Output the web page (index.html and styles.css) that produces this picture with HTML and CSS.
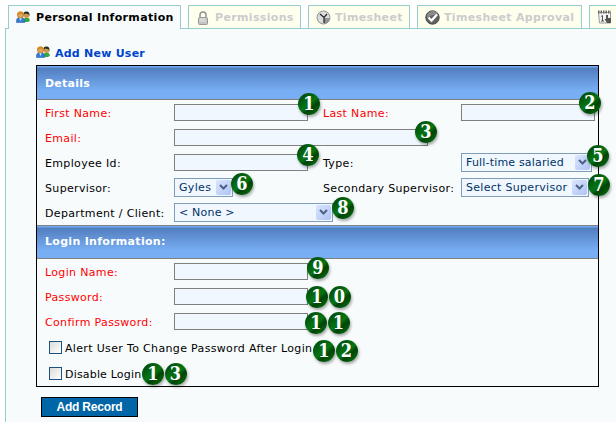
FILE: index.html
```html
<!DOCTYPE html>
<html lang="en">
<head>
<meta charset="utf-8">
<title>Add New User</title>
<link rel="stylesheet" href="styles.css">
</head>
<body>
<svg class="defs" width="0" height="0">
  <defs>
    <symbol id="users" viewBox="0 0 14 12">
      <path d="M8 11V8.500Q8 6.500 10.500 6.500T13.700 8.500V10L12 11Z" fill="#35a83c"/>
      <circle cx="10.500" cy="4" r="3" fill="#c99a55"/>
      <path d="M7.500 4Q7 .5 10.500 .5 14 .5 13.300 5L12.300 3 9 2.500Z" fill="#202a20"/>
      <path d="M.5 11.500V9Q.7 6.500 4.500 6.500T8.700 9V11.500Z" fill="#347bd2" stroke="#1d58a8" stroke-width=".5"/>
      <path d="M3 6.500 4.500 10 6 6.500Z" fill="#d9efff"/>
      <circle cx="4.500" cy="4" r="3.100" fill="#e2a35a" stroke="#a96313" stroke-width=".6"/>
      <path d="M1.300 4Q1 .6 4.500 .6 8 .6 7.700 4L5.500 2.500Z" fill="#d58a1e"/>
    </symbol>
  </defs>
</svg>
<div class="page">
  <nav class="tabs">
    <a class="tab t1 active"><svg class="users" width="14" height="12"><use href="#users"/></svg><span>Personal Information</span></a>
    <a class="tab t2"><svg width="10" height="14" viewBox="0 0 10 14"><path d="M2 7V4Q2 1 5 1T8 4V7" fill="none" stroke="#929292" stroke-width="1.500"/><rect x=".5" y="6.500" width="9" height="7" rx="1" fill="#c4c4c4" stroke="#999"/><path d="M1.500 8h6M1.500 10h6" stroke="#e9e9e9"/></svg><span>Permissions</span></a>
    <a class="tab t3"><svg width="15" height="15" viewBox="0 0 15 15"><circle cx="7.500" cy="7.500" r="6.500" fill="#dcdcdc" stroke="#929292"/><path d="M8 8H14Q13 13 8 14Z" fill="#929292"/><path d="M4 4 8 7.500 11 4M8 7.500V13" fill="none" stroke="#222" stroke-width="1.200"/></svg><span>Timesheet</span></a>
    <a class="tab t4"><svg width="15" height="15" viewBox="0 0 15 15"><circle cx="7.500" cy="7.500" r="6.700" fill="#626262" stroke="#484848"/><path d="M2 5Q4 1 8 1T13 5Q7 4 2 8Z" fill="#8a8a8a"/><path d="M3.500 7.500 6.500 10.500 12 4.500" fill="none" stroke="#fff" stroke-width="2.300"/></svg><span>Timesheet Approval</span></a>
    <a class="tab t5"><svg width="15" height="14" viewBox="0 0 15 14"><path d="M1.500 2.500H13.500V13H2.500Z" fill="#f4f4f4" stroke="#999"/><path d="M1 2h13" stroke="#666" stroke-width="3" stroke-dasharray="1.500 1"/><path d="M4 6.500 5.500 5.500V11M4 11h3" fill="none" stroke="#555"/><path d="M9 5h2v3h3v5h-4L7.500 9H9Z" fill="#555"/></svg></a>
  </nav>
  <main class="panel">
    <h1><svg class="users" width="14" height="12"><use href="#users"/></svg><span>Add New User</span></h1>
    <form class="form">
      <h2>Details</h2>
      <div class="row"><label class="req">First Name:</label><i class="input"></i><label class="req second">Last Name:</label><i class="input"></i></div>
      <div class="row"><label class="req">Email:</label><i class="input wide"></i></div>
      <div class="row"><label>Employee Id:</label><i class="input"></i><label class="second">Type:</label><div class="select type"><span>Full-time salaried</span><b><svg width="9" height="7" viewBox="0 0 9 7"><path d="M1 1 4.500 4.500 8 1" /></svg></b></div></div>
      <div class="row"><label>Supervisor:</label><div class="select gyles"><span>Gyles</span><b><svg width="9" height="7" viewBox="0 0 9 7"><path d="M1 1 4.500 4.500 8 1" /></svg></b></div><label class="second">Secondary Supervisor:</label><div class="select super"><span>Select Supervisor</span><b><svg width="9" height="7" viewBox="0 0 9 7"><path d="M1 1 4.500 4.500 8 1" /></svg></b></div></div>
      <div class="row"><label>Department / Client:</label><div class="select dept"><span>&lt; None &gt;</span><b><svg width="9" height="7" viewBox="0 0 9 7"><path d="M1 1 4.500 4.500 8 1" /></svg></b></div></div>
      <h2 class="login">Login Information:</h2>
      <div class="row"><label class="req">Login Name:</label><i class="input"></i></div>
      <div class="row"><label class="req">Password:</label><i class="input"></i></div>
      <div class="row"><label class="req">Confirm Password:</label><i class="input"></i></div>
      <div class="checks">
        <div class="check"><i class="box"></i><span>Alert User To Change Password After Login</span></div>
        <div class="check"><i class="box"></i><span class="disable">Disable Login</span></div>
      </div>
    </form>
    <div class="button"><span>Add Record</span></div>
  </main>
  <div class="pin p1"><b>1</b></div>
  <div class="pin p2"><b>2</b></div>
  <div class="pin p3"><b>3</b></div>
  <div class="pin p4"><b>4</b></div>
  <div class="pin p5"><b>5</b></div>
  <div class="pin p6"><b>6</b></div>
  <div class="pin p7"><b>7</b></div>
  <div class="pin p8"><b>8</b></div>
  <div class="pin p9"><b>9</b></div>
  <div class="pin p10"><b>1</b><b>0</b></div>
  <div class="pin p11"><b>1</b><b>1</b></div>
  <div class="pin p12"><b>1</b><b>2</b></div>
  <div class="pin p13"><b>1</b><b>3</b></div>
</div>
</body>
</html>
```
FILE: styles.css
```css
* { box-sizing: border-box; }
body { margin: 0; background: #fff; color: #000; font: 11px/14px "DejaVu Sans", Verdana, sans-serif; letter-spacing: .34px; overflow: hidden; }
.defs { display: block; }
.page { position: relative; width: 616px; height: 422px; overflow: hidden; }
.tabs { display: flex; gap: 7px; padding: 5px 0 0 8px; height: 28px; width: 640px; }
.tab { display: flex; align-items: center; flex: none; height: 23px; border: 1px solid #9cc; border-bottom: 0; background: #ffffee; color: #ccc; padding: 1px 0 0 7px; font-weight: bold; white-space: nowrap; }
.tab svg { flex: none; }
.tab span { padding-top: 1px; }
.t1 { width: 173px; }
.t2 { width: 113px; padding-left: 9px; }
.t3 { width: 102px; }
.t4 { width: 165px; }
.t5 { width: 60px; }
.t5 svg { margin-bottom: 1px; }
.t1 span { margin-left: 6px; }
.t2 span { margin-left: 7px; }
.t3 span, .t4 span { margin-left: 4px; }
.active { background: #f7fbfc; color: #000; height: 24px; padding-bottom: 1px; position: relative; z-index: 1; }
.active svg { margin-bottom: 2px; }
.panel { margin-left: 5px; height: 394px; border: solid #9cc; border-width: 1px 0 0 1px; background: #f7fbfc; padding: 16px 0 0 30px; }
h1 { display: flex; align-items: center; margin: 0 0 4px; height: 16px; font-size: 11px; color: #04c; letter-spacing: .24px; }
h1 svg { margin-bottom: 2px; }
h1 span { margin-left: 5px; padding-top: 1px; }
.form { width: 563px; height: 322px; border: 1px solid #000; }
h2 { margin: 0; height: 34px; padding-left: 8px; border-bottom: 1px solid #808080; background: linear-gradient(#70a9f0 0 1px, #527dbf 2px, #78aff4 25px); color: #fff; font-size: 11px; line-height: 35px; letter-spacing: .24px; }
.login { border-top: 1px solid #808080; line-height: 32px; letter-spacing: .3px; }
.row { display: grid; grid-template-columns: 129px 149px 138px 136px; align-items: center; height: 25px; padding-left: 8px; white-space: nowrap; }
label { padding-top: 2px; }
.req { color: #f00; }
.input { width: 134px; height: 17px; border: 1px solid #808080; background: #f0f7ff; }
.wide { width: 254px; }
.select { display: flex; align-items: center; justify-content: space-between; height: 19px; border: 1px solid #7f9db9; background: #f0f7ff; color: #036; padding: 1px 1px 1px 4px; }
.select span { padding-top: 1px; }
.select b { display: grid; place-items: center; width: 15px; height: 15px; border-radius: 2px; background: linear-gradient(135deg, #dae5ff, #afc3f3); }
.select path { fill: none; stroke: #4d6185; stroke-width: 2; }
.type { width: 131px; letter-spacing: .18px; }
.super { width: 128px; letter-spacing: .3px; }
.gyles { width: 59px; }
.dept { width: 159px; letter-spacing: .2px; }
.checks { padding-top: 1px; }
.check { display: flex; align-items: center; height: 26px; padding-left: 12px; white-space: nowrap; }
.check span { padding-top: 2px; }
.disable { letter-spacing: .18px; }
.box { width: 13px; height: 13px; border: 1px solid #1c5180; background: linear-gradient(135deg, #dcdcd7, #fff); margin: 0 3px 1px 0; }
.button { display: grid; place-items: center; width: 97px; height: 20px; margin: 10px 0 0 5px; border: 1px solid #000; background: #0066a8; color: #fff; font: bold 12px/14px "Liberation Sans", Arial, sans-serif; letter-spacing: -.2px; }
.pin { position: absolute; z-index: 2; display: flex; color: #fff; letter-spacing: 0; }
.pin b { width: 22px; height: 22px; margin-right: .5px; border-radius: 50%; background: linear-gradient(140deg, #00410a, #077513 50%, #004408 65%, #087812); box-shadow: 1px 2px 3px #0005; font: bold 18px/22px "DejaVu Serif Condensed", "DejaVu Serif", serif; font-stretch: condensed; text-align: center; }
.p1 { left: 298px; top: 93px; }
.p2 { left: 579px; top: 92px; }
.p3 { left: 415px; top: 121px; }
.p4 { left: 297px; top: 144px; }
.p5 { left: 587px; top: 145px; }
.p6 { left: 231px; top: 173px; }
.p7 { left: 588px; top: 174px; }
.p8 { left: 332px; top: 197px; }
.p9 { left: 307px; top: 257px; }
.p10 { left: 306px; top: 286px; }
.p11 { left: 305px; top: 312px; }
.p12 { left: 313px; top: 340px; }
.p13 { left: 142px; top: 363px; }
```
